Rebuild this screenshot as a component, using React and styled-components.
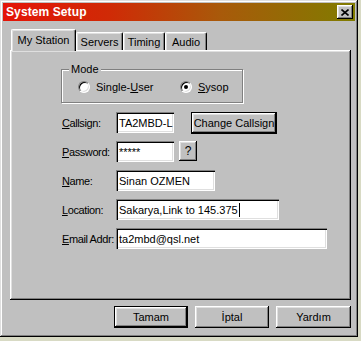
import React from 'react';
import styled, { createGlobalStyle } from 'styled-components';

const GlobalStyle = createGlobalStyle`
  html, body {
    margin: 0;
    padding: 0;
    background: #d8dac4;
  }
  body {
    font-family: "Liberation Sans", Arial, sans-serif;
    font-size: 11px;
    color: #000;
  }
`;

const raised = `
  box-shadow: inset -1px -1px #000, inset 1px 1px #fff,
    inset -2px -2px #808080, inset 2px 2px #dfdfdf;
`;

const Window = styled.div`
  width: 358px;
  height: 337px;
  box-sizing: border-box;
  padding: 3px;
  background: #c0c0c0;
  display: flex;
  flex-direction: column;
  box-shadow: inset -1px -1px #000, inset 1px 1px #dfdfdf,
    inset -2px -2px #808080, inset 2px 2px #fff;
`;

const TitleBar = styled.div`
  height: 18px;
  flex: 0 0 18px;
  display: flex;
  align-items: center;
  justify-content: space-between;
  padding: 0 2px 0 3px;
  background: linear-gradient(90deg, #e41408 0%, #d02a06 30%, #a85a0a 62%, #807c00 100%);
`;

const Title = styled.span`
  color: #fff;
  font-weight: bold;
  font-size: 12px;
  letter-spacing: 0.1px;
`;

const CloseButton = styled.button`
  width: 16px;
  height: 14px;
  padding: 0;
  border: none;
  background: #c0c0c0;
  display: flex;
  align-items: center;
  justify-content: center;
  ${raised}
`;

const Body = styled.div`
  flex: 1;
  display: flex;
  flex-direction: column;
  padding: 8px 4px 0 7px;
`;

const TabRow = styled.div`
  height: 21px;
  display: flex;
  align-items: flex-end;
  padding-left: 1px;
  position: relative;
  z-index: 1;
`;

const Tab = styled.div`
  width: ${p => p.$w}px;
  height: ${p => (p.$active ? 22 : 18)}px;
  margin-bottom: ${p => (p.$active ? -1 : 0)}px;
  box-sizing: border-box;
  background: #c0c0c0;
  border-top: 1px solid #fff;
  border-left: 1px solid #fff;
  border-right: 1px solid #000;
  border-radius: 2px 2px 0 0;
  box-shadow: inset -1px 0 #808080, inset 1px 1px #dfdfdf;
  display: flex;
  align-items: ${p => (p.$active ? 'flex-start' : 'center')};
  justify-content: center;
  padding-top: ${p => (p.$active ? 4 : 0)}px;
`;

const Panel = styled.div`
  flex: 0 0 250px;
  box-sizing: border-box;
  background: #c0c0c0;
  padding: 13px 0 0 51px;
  ${raised}
`;

const GroupBox = styled.fieldset`
  width: 182px;
  box-sizing: border-box;
  margin: 0;
  padding: 0 0 4px 16px;
  border: 1px solid #808080;
  box-shadow: inset 1px 1px #fff, 1px 1px #fff;
`;

const Legend = styled.legend`
  margin-left: -9px;
  padding: 0 2px;
  line-height: 13px;
  font-size: 11px;
  background: #c0c0c0;
`;

const RadioRow = styled.div`
  height: 22px;
  display: grid;
  grid-template-columns: 102px auto;
  align-items: center;
`;

const RadioItem = styled.label`
  display: flex;
  align-items: center;
  gap: 6px;
`;

const RadioCircle = styled.span`
  width: 12px;
  height: 12px;
  box-sizing: border-box;
  border-radius: 50%;
  background: #fff;
  border: 1px solid;
  border-color: #808080 #fff #fff #808080;
  box-shadow: inset 1px 1px #000, inset -1px -1px #dfdfdf;
  display: flex;
  align-items: center;
  justify-content: center;

  &::after {
    content: '';
    width: 4px;
    height: 4px;
    border-radius: 50%;
    background: ${p => (p.$checked ? '#000' : 'transparent')};
  }
`;

const Form = styled.div`
  margin-top: 9px;
  padding-left: 1px;
  display: grid;
  grid-template-columns: 54px auto;
  grid-auto-rows: 21px;
  row-gap: 8px;
  align-items: center;
`;

const Label = styled.span`
  letter-spacing: -0.4px;
  white-space: nowrap;
`;

const FieldGroup = styled.div`
  display: flex;
  align-items: flex-start;
  gap: ${p => p.$gap || 0}px;
  align-self: start;
`;

const Field = styled.div`
  width: ${p => p.$w}px;
  height: 21px;
  box-sizing: border-box;
  padding: 0 3px;
  background: #fff;
  display: flex;
  align-items: center;
  white-space: nowrap;
  overflow: hidden;
  box-shadow: inset 1px 1px #808080, inset 2px 2px #000,
    inset -1px -1px #fff, inset -2px -2px #dfdfdf;
`;

const Caret = styled.span`
  width: 1px;
  height: 14px;
  background: #000;
  margin-left: 1px;
`;

const Button = styled.button`
  width: ${p => p.$w}px;
  height: ${p => p.$h || 22}px;
  box-sizing: border-box;
  padding: 0;
  background: #c0c0c0;
  font-family: "Liberation Sans", Arial, sans-serif;
  font-size: ${p => p.$fs || 11}px;
  color: #000;
  border: ${p => (p.$default ? '1px solid #000' : 'none')};
  ${raised}
`;

const ButtonRow = styled.div`
  margin-top: 6px;
  display: flex;
  justify-content: flex-end;
  gap: 7px;
`;

const fields = [
  { key: 'C', rest: 'allsign:' },
  { key: 'P', rest: 'assword:' },
  { key: 'N', rest: 'ame:' },
  { key: 'L', rest: 'ocation:' },
  { key: 'E', rest: 'mail Addr:' },
];

function FieldLabel({ index }) {
  const f = fields[index];
  return (
    <Label>
      <u>{f.key}</u>
      {f.rest}
    </Label>
  );
}

export default function App() {
  return (
    <>
      <GlobalStyle />
      <Window>
        <TitleBar>
          <Title>System Setup</Title>
          <CloseButton>
            <svg width="8" height="7" viewBox="0 0 8 7">
              <path d="M0.5 0.5 L7.5 6.5 M7.5 0.5 L0.5 6.5" stroke="#000" strokeWidth="1.6" />
            </svg>
          </CloseButton>
        </TitleBar>
        <Body>
          <TabRow>
            <Tab $active $w={65}>My Station</Tab>
            <Tab $w={47}>Servers</Tab>
            <Tab $w={42}>Timing</Tab>
            <Tab $w={42}>Audio</Tab>
          </TabRow>
          <Panel>
            <GroupBox>
              <Legend>Mode</Legend>
              <RadioRow>
                <RadioItem>
                  <RadioCircle />
                  <span>Single-<u>U</u>ser</span>
                </RadioItem>
                <RadioItem>
                  <RadioCircle $checked />
                  <span><u>S</u>ysop</span>
                </RadioItem>
              </RadioRow>
            </GroupBox>
            <Form>
              <FieldLabel index={0} />
              <FieldGroup $gap={17}>
                <Field $w={58}>TA2MBD-L</Field>
                <Button $default $w={86}>Change Callsign</Button>
              </FieldGroup>
              <FieldLabel index={1} />
              <FieldGroup $gap={5}>
                <Field $w={58}>*****</Field>
                <Button $w={18} $h={20} $fs={12}>?</Button>
              </FieldGroup>
              <FieldLabel index={2} />
              <Field $w={99}>Sinan OZMEN</Field>
              <FieldLabel index={3} />
              <Field $w={163}>
                Sakarya,Link to 145.375
                <Caret />
              </Field>
              <FieldLabel index={4} />
              <Field $w={211}>ta2mbd@qsl.net</Field>
            </Form>
          </Panel>
          <ButtonRow>
            <Button $default $w={74}>Tamam</Button>
            <Button $w={74}>İptal</Button>
            <Button $w={75}>Yardım</Button>
          </ButtonRow>
        </Body>
      </Window>
    </>
  );
}
